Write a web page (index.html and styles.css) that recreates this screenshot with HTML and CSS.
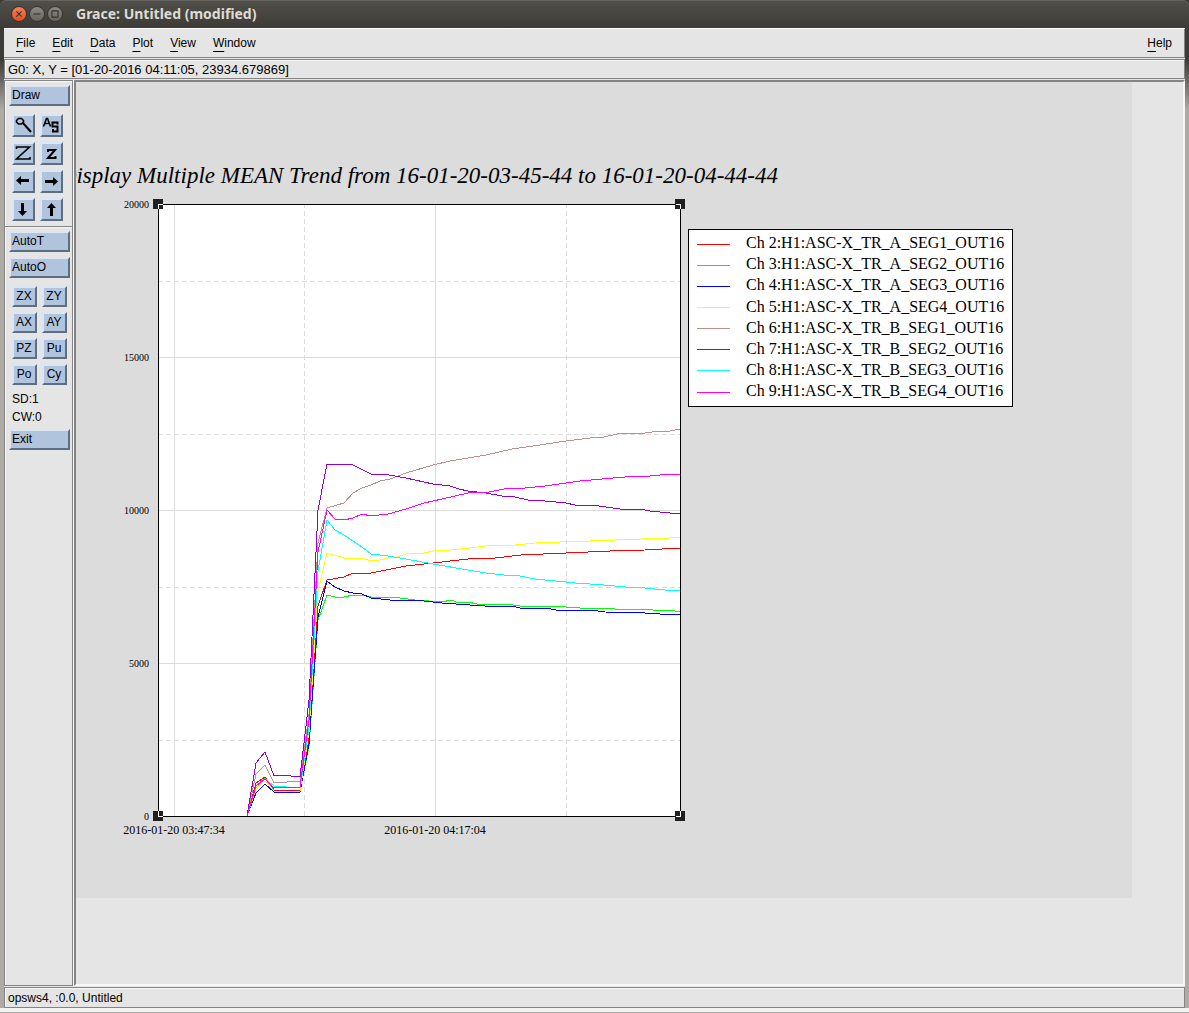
FILE: index.html
```html
<!DOCTYPE html>
<html lang="en">

<head>
    <meta charset="UTF-8">
    <meta name="viewport" content="width=device-width, initial-scale=1.0">
    <title>Grace: Untitled (modified)</title>
    <link rel="stylesheet" href="styles.css">
</head>

<body>
    <header class="title-bar">
        <button class="window-button close" aria-label="Close">
            <svg viewBox="0 0 16 16"><path d="M5 5l6 6M11 5l-6 6" /></svg>
        </button>
        <button class="window-button" aria-label="Minimize">
            <svg viewBox="0 0 16 16"><path d="M4 8h8" /></svg>
        </button>
        <button class="window-button" aria-label="Maximize">
            <svg viewBox="0 0 16 16"><path d="M4.500 4.500h7v7h-7z" /></svg>
        </button>
        <h1>Grace: Untitled (modified)</h1>
    </header>

    <div class="window">
        <nav class="menu-bar">
            <button><u>F</u>ile</button>
            <button><u>E</u>dit</button>
            <button><u>D</u>ata</button>
            <button><u>P</u>lot</button>
            <button><u>V</u>iew</button>
            <button><u>W</u>indow</button>
            <button class="help"><u>H</u>elp</button>
        </nav>

        <div class="locator">G0: X, Y = [01-20-2016 04:11:05, 23934.679869]</div>

        <main class="workspace">
            <aside class="tools">
                <button class="wide">Draw</button>
                <div class="icon-grid">
                    <button aria-label="Zoom">
                        <svg viewBox="0 0 19 19"><path class="medium" d="M4.500 2.500h3l2 2v1.500l-2 2h-3l-2-2v-1.500z" /><path class="bold" d="M9 7l8 9" /></svg>
                    </button>
                    <button aria-label="Autoscale">
                        <svg viewBox="0 0 19 19"><path class="medium" d="M1.500 10.500l3-8h1l3 8M3 7.500h4" /><path class="bold" d="M15.500 8.500v-2h-5v4h5v5h-4.500v-2.500" /></svg>
                    </button>
                    <button aria-label="Zoom in">
                        <svg viewBox="0 0 19 19"><path class="medium" d="M2.500 5v-2h13l-13 12h13.500v-2" /></svg>
                    </button>
                    <button aria-label="Zoom out">
                        <svg viewBox="0 0 19 19"><path class="bold" d="M6 8v-2h7l-7 8h7.500v-2" /></svg>
                    </button>
                    <button aria-label="Scroll left">
                        <svg viewBox="0 0 19 19"><path class="arrow" d="M5 8.500h10" /><path class="fill" d="M2 8.500l5-4.500v9z" /></svg>
                    </button>
                    <button aria-label="Scroll right">
                        <svg viewBox="0 0 19 19"><path class="arrow" d="M3 9.500h10" /><path class="fill" d="M16 9.500l-5-4.500v9z" /></svg>
                    </button>
                    <button aria-label="Scroll down">
                        <svg viewBox="0 0 19 19"><path class="arrow" d="M8.500 3v10" /><path class="fill" d="M8.500 16l-4.500-5h9z" /></svg>
                    </button>
                    <button aria-label="Scroll up">
                        <svg viewBox="0 0 19 19"><path class="arrow" d="M9.500 6v10" /><path class="fill" d="M9.500 3l-4.500 5h9z" /></svg>
                    </button>
                </div>
                <hr>
                <button class="wide">AutoT</button>
                <button class="wide">AutoO</button>
                <div class="text-grid">
                    <button>ZX</button>
                    <button>ZY</button>
                    <button>AX</button>
                    <button>AY</button>
                    <button>PZ</button>
                    <button>Pu</button>
                    <button>Po</button>
                    <button>Cy</button>
                </div>
                <p>SD:1</p>
                <p>CW:0</p>
                <button class="wide exit">Exit</button>
            </aside>

            <section class="canvas">
                <svg class="page" width="1056" height="816" viewBox="76 82 1056 816">
                    <text class="plot-title" x="778" y="183">Display Multiple MEAN Trend from 16-01-20-03-45-44 to 16-01-20-04-44-44</text>

                    <rect class="plot-area" x="158" y="204" width="523" height="613" />

                    <g class="grid">
                        <path d="M174.500 204v612M435.500 204v612M158 357.500h522M158 510.500h522M158 663.500h522" />
                        <path class="minor" d="M304.500 816v-612M566.500 816v-612M158 281.500h522M158 434.500h522M158 587.500h522M158 740.500h522" />
                    </g>

                    <g class="series">
                        <polyline stroke="#ff0000" points="247,816 256,783 265,777 274,790 300,790 309,738 318,606 327,580 344,577 353,573 371,573 406,566 433,563 468,559 495,558 521,555 566,553 610,551 645,550 680,548" />
                        <polyline stroke="#00ff00" points="247,816 256,786 265,778 274,791 300,791 309,746 318,620 327,595 335,597 344,597 353,595 362,595 371,597 400,598 415,600 442,602 451,600 459,603 468,602 477,604 508,604 513,605 520,606 551,606 580,608 600,609 610,608 620,610 630,609 675,611 680,611" />
                        <polyline stroke="#0000ff" points="247,816 256,793 265,784 274,792 300,792 309,744 318,617 327,581 335,587 344,591 353,593 362,594 371,598 400,601 415,600 442,603 470,605 500,607 512,606 520,608 540,609 546,608 556,610 590,610 605,612 645,613 660,614 680,614" />
                        <polyline stroke="#ffff00" points="247,816 256,789 265,781 274,791 300,791 309,732 318,591 327,553 344,558 362,558 371,561 380,560 388,558 397,557 406,554 424,553 433,551 450,550 470,548 486,546 515,545 535,543 560,542 590,541 600,540 610,541 620,539 633,540 650,538 670,538 680,537" />
                        <polyline stroke="#bc8f8f" points="247,816 256,774 265,765 274,783 300,781 309,714 318,543 327,508 344,503 353,493 362,488 371,485 380,481 390,479 406,473 433,465 450,461 486,455 512,449 540,445 566,441 590,438 604,437 617,434 645,433 660,431 670,431 680,429" />
                        <polyline stroke="#9400d3" points="247,816 256,763 265,752 274,776 282,775 300,777 309,700 318,510 327,464 353,465 371,474 389,475 406,478 433,484 450,486 459,489 468,491 486,493 502,496 515,497 528,500 545,501 566,503 575,505 592,505 620,509 630,510 640,509 650,511 680,514" />
                        <polyline stroke="#00ffff" points="247,816 256,788 265,779 274,786 300,788 309,728 318,571 327,520 335,530 344,535 353,541 362,547 371,554 388,556 406,559 433,564 468,570 486,573 504,575 520,576 535,579 566,582 575,583 604,585 625,587 645,588 665,590 680,591" />
                        <polyline stroke="#ff00ff" points="247,816 256,786 265,779 274,788 300,787 309,720 318,552 327,510 335,519 344,520 353,518 362,514 371,516 388,514 406,509 424,503 442,499 468,493 489,492 504,489 525,488 545,486 566,483 580,481 602,479 625,477 650,476 670,474 680,474" />
                    </g>

                    <rect class="frame" x="158.500" y="204.500" width="522" height="612" />

                    <!-- selection handles on the graph corners -->
                    <g class="handles">
                        <path d="M153 199h10v10h-10zM675 199h10v10h-10zM153 811h10v10h-10zM675 811h10v10h-10z" />
                        <path class="notch" d="M158.500 209v-4.500h4.500M680.500 209v-4.500h-4.500M158.500 811v5.500h4.500M680.500 811v5.500h-4.500" />
                    </g>

                    <g class="y-labels">
                        <text x="149" y="208">20000</text>
                        <text x="149" y="361">15000</text>
                        <text x="149" y="514">10000</text>
                        <text x="149" y="667">5000</text>
                        <text x="149" y="820">0</text>
                    </g>
                    <g class="x-labels">
                        <text x="174" y="834">2016-01-20 03:47:34</text>
                        <text x="435" y="834">2016-01-20 04:17:04</text>
                    </g>

                    <g class="legend">
                        <rect x="688.500" y="229.500" width="324" height="177" />
                        <path stroke="#ff0000" d="M697 244.500h33" />
                        <path stroke="#00ff00" d="M697 265.500h33" />
                        <path stroke="#0000ff" d="M697 286.500h33" />
                        <path stroke="#ffff00" d="M697 307.500h33" />
                        <path stroke="#bc8f8f" d="M697 328.500h33" />
                        <path stroke="#9400d3" d="M697 349.500h33" />
                        <path stroke="#00ffff" d="M697 370.500h33" />
                        <path stroke="#ff00ff" d="M697 392.500h33" />
                        <text x="746" y="248">Ch 2:H1:ASC-X_TR_A_SEG1_OUT16</text>
                        <text x="746" y="269">Ch 3:H1:ASC-X_TR_A_SEG2_OUT16</text>
                        <text x="746" y="290">Ch 4:H1:ASC-X_TR_A_SEG3_OUT16</text>
                        <text x="746" y="312">Ch 5:H1:ASC-X_TR_A_SEG4_OUT16</text>
                        <text x="746" y="333">Ch 6:H1:ASC-X_TR_B_SEG1_OUT16</text>
                        <text x="746" y="354">Ch 7:H1:ASC-X_TR_B_SEG2_OUT16</text>
                        <text x="746" y="375">Ch 8:H1:ASC-X_TR_B_SEG3_OUT16</text>
                        <text x="746" y="396">Ch 9:H1:ASC-X_TR_B_SEG4_OUT16</text>
                    </g>
                </svg>
            </section>
        </main>

        <footer class="status-bar">opsws4, :0.0, Untitled</footer>
    </div>
</body>

</html>
```
FILE: styles.css
```css
* {
    box-sizing: border-box;
}

body {
    margin: 0;
    min-height: 100vh;
    display: flex;
    flex-direction: column;
    background: linear-gradient(#3c3b37 60px, #aeaaa4 110px);
    font-family: "Liberation Sans", Arial, sans-serif;
    font-size: 12px;
    color: #000000;
}

body::after {
    content: "";
    height: 4px;
    background: #f2f2f2;
    border-bottom: 1px solid #aeaaa4;
}

button {
    font: inherit;
    color: inherit;
    margin: 0;
    padding: 0;
    border: none;
    background: none;
}

.title-bar {
    display: flex;
    align-items: center;
    gap: 2px;
    height: 28px;
    padding: 0 0 1px 11px;
    background: linear-gradient(#504f49, #3c3b37);
    border-top: 1px solid #66645e;
    border-radius: 6px 6px 0 0;
}

.title-bar h1 {
    margin: 0 0 0 11px;
    font-family: "Noto Sans", "Open Sans", sans-serif;
    font-size: 14px;
    line-height: 20px;
    font-weight: bold;
    color: #dfdbd2;
}

.window-button {
    width: 16px;
    height: 16px;
    border: 1px solid #35342f;
    border-radius: 50%;
    background: linear-gradient(#8c8a82, #66645d);
}

.window-button.close {
    background: linear-gradient(#f7825b, #e2501f);
}

.window-button svg {
    display: block;
    width: 100%;
    height: 100%;
    fill: none;
    stroke: #35342f;
    stroke-width: 1.3;
}

.window {
    flex: 1;
    display: flex;
    flex-direction: column;
    margin: 0 4px;
    background: #e5e5e5;
    border-top: 1px solid #ffffff;
}

.menu-bar {
    display: flex;
    gap: 17px;
    height: 29px;
    padding: 0 12px;
    border-right: 1px solid #848484;
    border-bottom: 1px solid #848484;
}

.menu-bar u {
    text-underline-offset: 4px;
}

.help {
    margin-left: auto;
}

.locator,
.status-bar {
    display: flex;
    align-items: center;
    margin-top: 1px;
    padding-left: 3px;
    border: 1px solid #848484;
    box-shadow: inset 1px 1px #f7f7f7;
}

.locator {
    height: 20px;
    font-size: 13px;
}

.status-bar {
    height: 21px;
}

.workspace {
    flex: 1;
    display: flex;
    gap: 1px;
    margin-top: 1px;
}

.tools {
    width: 69px;
    padding: 4px 2px 0 4px;
    border: 1px solid #848484;
    box-shadow: inset 1px 1px #f7f7f7, 1px 0 #f7f7f7;
}

.tools button {
    background: #b0c4de;
    border: 2px solid;
    border-color: #dce6f2 #5f6d80 #5f6d80 #dce6f2;
}

.tools .wide {
    display: block;
    width: 61px;
    height: 21px;
    padding: 0 0 1px 1px;
    text-align: left;
}

.icon-grid {
    display: grid;
    grid-template-columns: repeat(2, 23px);
    grid-auto-rows: 23px;
    gap: 5px;
    margin: 8px 0 5px 3px;
}

.icon-grid svg {
    display: block;
    width: 19px;
    height: 19px;
    fill: none;
    stroke: #000000;
}

.icon-grid .medium {
    stroke-width: 1.6;
}

.icon-grid .bold {
    stroke-width: 2;
}

.icon-grid .arrow {
    stroke-width: 3;
}

.icon-grid .fill {
    fill: #000000;
    stroke: none;
}

.tools hr {
    height: 2px;
    margin: 0 -2px 3px -4px;
    border: none;
    border-top: 1px solid #848484;
    border-bottom: 1px solid #f7f7f7;
}

.wide + .wide {
    margin-top: 5px;
}

.text-grid {
    display: grid;
    grid-template-columns: repeat(2, 25px);
    grid-auto-rows: 21px;
    gap: 5px;
    margin: 8px 0 5px 3px;
}

.text-grid button {
    padding: 0 1px 1px 0;
}

.tools p {
    margin: 0 0 0 3px;
    line-height: 18px;
}

.tools .exit {
    margin-top: 3px;
}

.canvas {
    flex: 1;
    min-width: 0;
    overflow: hidden;
    border: 2px solid;
    border-color: #848484 #f7f7f7 #f7f7f7 #848484;
}

.page {
    display: block;
    background: #dcdcdc;
    font-family: "Liberation Serif", "Times New Roman", serif;
}

.plot-title {
    font-size: 23px;
    font-style: italic;
    text-anchor: end;
}

.plot-area {
    fill: #ffffff;
}

.grid,
.series,
.frame,
.notch,
.legend {
    fill: none;
    stroke-width: 1;
    shape-rendering: crispEdges;
}

.grid {
    stroke: #dcdcdc;
}

.minor {
    stroke-dasharray: 5 3;
}

.frame {
    stroke: #000000;
}

.handles {
    fill: #202020;
}

.handles .notch {
    fill: none;
    stroke: #ffffff;
}

.y-labels {
    font-size: 10px;
    text-anchor: end;
}

.x-labels {
    font-size: 12px;
    text-anchor: middle;
}

.legend rect {
    fill: #ffffff;
    stroke: #000000;
}

.legend text {
    font-size: 16px;
    fill: #000000;
}
```
